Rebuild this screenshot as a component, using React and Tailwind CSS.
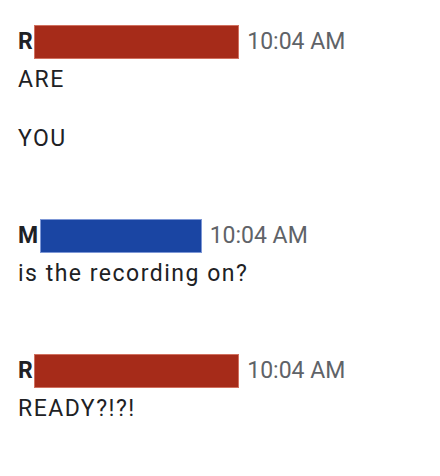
import React from 'react';

const messages = [
  { initial: 'R', box: 'w-[205px] bg-[#a62b19] border-[#d0705f]', lines: ['ARE', 'YOU'] },
  { initial: 'M', box: 'w-[162px] bg-[#1a45a3] border-[#7d97d6]', lines: ['is the recording on?'] },
  { initial: 'R', box: 'w-[205px] bg-[#a62b19] border-[#d0705f]', lines: ['READY?!?!'] },
];

const Message = ({ initial, box, lines }) => (
  <div>
    <div className="flex items-center h-[38px]">
      <span className="font-bold text-[#202124] tracking-[1.5px]">{initial}</span>
      <span className={`inline-block h-[34px] border ${box}`}></span>
      <span className="ml-[8px] text-[#5f6368]">10:04 AM</span>
    </div>
    <div className="flex flex-col gap-[21px]">
      {lines.map((line, i) => (
        <p key={i} className="text-[#202124] tracking-[1.5px]">{line}</p>
      ))}
    </div>
  </div>
);

export default function App() {
  return (
    <div
      className="w-[440px] h-[476px] bg-white pl-[18px] pt-[23px] flex flex-col gap-[59px] text-[23px] leading-[38px]"
      style={{ fontFamily: 'Roboto, sans-serif' }}
    >
      {messages.map((m, i) => (
        <Message key={i} {...m} />
      ))}
    </div>
  );
}
